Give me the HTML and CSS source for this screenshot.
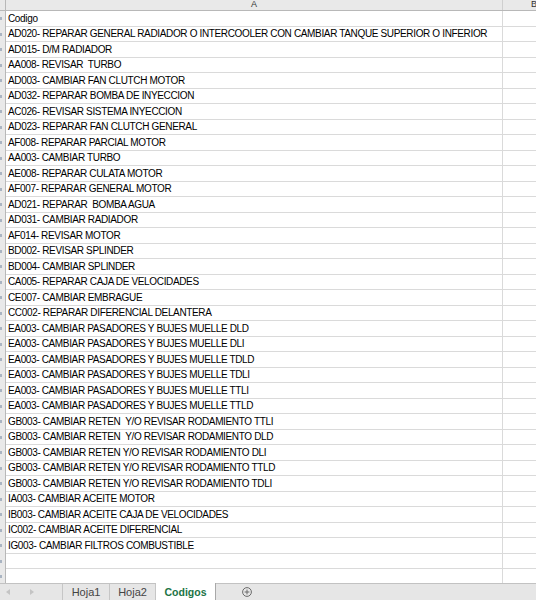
FILE: index.html
```html
<!DOCTYPE html>
<html>
<head>
<meta charset="utf-8">
<link rel="stylesheet" href="styles.css">
</head>
<body>
<div class="app">
  <div class="sheet">
    <div class="hdr"><div class="rh"></div><div class="ch col-a">A</div><div class="ch col-b">B</div></div>
    <div class="row"><div class="rh"></div><div class="cell col-a">Codigo</div><div class="cell col-b"></div></div>
    <div class="row"><div class="rh"></div><div class="cell col-a">AD020- REPARAR GENERAL RADIADOR O INTERCOOLER CON CAMBIAR TANQUE SUPERIOR O INFERIOR</div><div class="cell col-b"></div></div>
    <div class="row"><div class="rh"></div><div class="cell col-a">AD015- D/M RADIADOR</div><div class="cell col-b"></div></div>
    <div class="row"><div class="rh"></div><div class="cell col-a">AA008- REVISAR&nbsp; TURBO</div><div class="cell col-b"></div></div>
    <div class="row"><div class="rh"></div><div class="cell col-a">AD003- CAMBIAR FAN CLUTCH MOTOR</div><div class="cell col-b"></div></div>
    <div class="row"><div class="rh"></div><div class="cell col-a">AD032- REPARAR BOMBA DE INYECCION</div><div class="cell col-b"></div></div>
    <div class="row"><div class="rh"></div><div class="cell col-a">AC026- REVISAR SISTEMA INYECCION</div><div class="cell col-b"></div></div>
    <div class="row"><div class="rh"></div><div class="cell col-a">AD023- REPARAR FAN CLUTCH GENERAL</div><div class="cell col-b"></div></div>
    <div class="row"><div class="rh"></div><div class="cell col-a">AF008- REPARAR PARCIAL MOTOR</div><div class="cell col-b"></div></div>
    <div class="row"><div class="rh"></div><div class="cell col-a">AA003- CAMBIAR TURBO</div><div class="cell col-b"></div></div>
    <div class="row"><div class="rh"></div><div class="cell col-a">AE008- REPARAR CULATA MOTOR</div><div class="cell col-b"></div></div>
    <div class="row"><div class="rh"></div><div class="cell col-a">AF007- REPARAR GENERAL MOTOR</div><div class="cell col-b"></div></div>
    <div class="row"><div class="rh"></div><div class="cell col-a">AD021- REPARAR&nbsp; BOMBA AGUA</div><div class="cell col-b"></div></div>
    <div class="row"><div class="rh"></div><div class="cell col-a">AD031- CAMBIAR RADIADOR</div><div class="cell col-b"></div></div>
    <div class="row"><div class="rh"></div><div class="cell col-a">AF014- REVISAR MOTOR</div><div class="cell col-b"></div></div>
    <div class="row"><div class="rh"></div><div class="cell col-a">BD002- REVISAR SPLINDER</div><div class="cell col-b"></div></div>
    <div class="row"><div class="rh"></div><div class="cell col-a">BD004- CAMBIAR SPLINDER</div><div class="cell col-b"></div></div>
    <div class="row"><div class="rh"></div><div class="cell col-a">CA005- REPARAR CAJA DE VELOCIDADES</div><div class="cell col-b"></div></div>
    <div class="row"><div class="rh"></div><div class="cell col-a">CE007- CAMBIAR EMBRAGUE</div><div class="cell col-b"></div></div>
    <div class="row"><div class="rh"></div><div class="cell col-a">CC002- REPARAR DIFERENCIAL DELANTERA</div><div class="cell col-b"></div></div>
    <div class="row"><div class="rh"></div><div class="cell col-a">EA003- CAMBIAR PASADORES Y BUJES MUELLE DLD</div><div class="cell col-b"></div></div>
    <div class="row"><div class="rh"></div><div class="cell col-a">EA003- CAMBIAR PASADORES Y BUJES MUELLE DLI</div><div class="cell col-b"></div></div>
    <div class="row"><div class="rh"></div><div class="cell col-a">EA003- CAMBIAR PASADORES Y BUJES MUELLE TDLD</div><div class="cell col-b"></div></div>
    <div class="row"><div class="rh"></div><div class="cell col-a">EA003- CAMBIAR PASADORES Y BUJES MUELLE TDLI</div><div class="cell col-b"></div></div>
    <div class="row"><div class="rh"></div><div class="cell col-a">EA003- CAMBIAR PASADORES Y BUJES MUELLE TTLI</div><div class="cell col-b"></div></div>
    <div class="row"><div class="rh"></div><div class="cell col-a">EA003- CAMBIAR PASADORES Y BUJES MUELLE TTLD</div><div class="cell col-b"></div></div>
    <div class="row"><div class="rh"></div><div class="cell col-a">GB003- CAMBIAR RETEN&nbsp; Y/O REVISAR RODAMIENTO TTLI</div><div class="cell col-b"></div></div>
    <div class="row"><div class="rh"></div><div class="cell col-a">GB003- CAMBIAR RETEN&nbsp; Y/O REVISAR RODAMIENTO DLD</div><div class="cell col-b"></div></div>
    <div class="row"><div class="rh"></div><div class="cell col-a">GB003- CAMBIAR RETEN Y/O REVISAR RODAMIENTO DLI</div><div class="cell col-b"></div></div>
    <div class="row"><div class="rh"></div><div class="cell col-a">GB003- CAMBIAR RETEN Y/O REVISAR RODAMIENTO TTLD</div><div class="cell col-b"></div></div>
    <div class="row"><div class="rh"></div><div class="cell col-a">GB003- CAMBIAR RETEN Y/O REVISAR RODAMIENTO TDLI</div><div class="cell col-b"></div></div>
    <div class="row"><div class="rh"></div><div class="cell col-a">IA003- CAMBIAR ACEITE MOTOR</div><div class="cell col-b"></div></div>
    <div class="row"><div class="rh"></div><div class="cell col-a">IB003- CAMBIAR ACEITE CAJA DE VELOCIDADES</div><div class="cell col-b"></div></div>
    <div class="row"><div class="rh"></div><div class="cell col-a">IC002- CAMBIAR ACEITE DIFERENCIAL</div><div class="cell col-b"></div></div>
    <div class="row"><div class="rh"></div><div class="cell col-a">IG003- CAMBIAR FILTROS COMBUSTIBLE</div><div class="cell col-b"></div></div>
    <div class="row"><div class="rh"></div><div class="cell col-a"></div><div class="cell col-b"></div></div>
    <div class="row"><div class="rh"></div><div class="cell col-a"></div><div class="cell col-b"></div></div>
    <div class="row"><div class="rh"></div><div class="cell col-a"></div><div class="cell col-b"></div></div>
  </div>
  <div class="tabbar">
    <div class="nav">
      <svg width="4" height="6" viewBox="0 0 4 6" class="arrow"><path d="M4 0 L0 3 L4 6 Z" fill="#c4c4c4"/></svg>
      <svg width="4" height="6" viewBox="0 0 4 6" class="arrow"><path d="M0 0 L4 3 L0 6 Z" fill="#c4c4c4"/></svg>
    </div>
    <div class="tab">Hoja1</div>
    <div class="tab">Hoja2</div>
    <div class="tab active">Codigos</div>
    <div class="add">
      <svg width="10" height="10" viewBox="0 0 10 10"><circle cx="5" cy="5" r="4.4" fill="none" stroke="#6a6a6a" stroke-width="1"/><path d="M5 2.6 V7.4 M2.6 5 H7.4" stroke="#6a6a6a" stroke-width="1"/></svg>
    </div>
  </div>
</div>
</body>
</html>
```

FILE: styles.css
```css
html, body {
  margin: 0;
  padding: 0;
  background: #ffffff;
}
.app {
  width: 536px;
  height: 600px;
  overflow: hidden;
  display: flex;
  flex-direction: column;
}
.sheet {
  height: 583px;
  overflow: hidden;
  flex: none;
}
.hdr, .row {
  display: flex;
  box-sizing: border-box;
}
.hdr {
  height: 11px;
  background: #e9e9e9;
  border-bottom: 1px solid #b8b8b8;
}
.row {
  height: 16px;
  border-bottom: 1px solid #dadada;
}
.row:nth-child(odd) {
  height: 15px;
}
.rh {
  width: 6px;
  flex: none;
  box-sizing: border-box;
  background: #e9e9e9;
  border-right: 1px solid #b8b8b8;
  margin-bottom: -1px;
  position: relative;
}
.row .rh::before {
  content: "";
  position: absolute;
  left: 0;
  top: 6px;
  width: 2px;
  height: 3px;
  background: #a9b4c2;
}
.hdr .rh {
  margin-bottom: 0;
}
.ch {
  font-family: "Liberation Sans", Arial, sans-serif;
  font-size: 9px;
  color: #333;
  line-height: 9px;
  display: flex;
  align-items: flex-end;
  justify-content: center;
  padding-bottom: 1px;
  box-sizing: border-box;
}
.col-a {
  width: 497px;
  flex: none;
  box-sizing: border-box;
  border-right: 1px solid #dadada;
}
.hdr .col-a {
  border-right-color: #cfcfcf;
}
.col-b {
  flex: 1;
  min-width: 0;
}
.hdr .col-b {
  justify-content: flex-start;
  padding-left: 28px;
}
.cell {
  font-family: "Liberation Sans", Arial, sans-serif;
  font-size: 10px;
  letter-spacing: -0.35px;
  color: #000;
  line-height: 15px;
  padding-left: 2px;
  white-space: nowrap;
}
.row:nth-child(odd) .cell {
  line-height: 14px;
}
.tabbar {
  flex: 1;
  display: flex;
  align-items: stretch;
  background: #e6e6e6;
  border-top: 1px solid #c2c2c2;
  box-sizing: border-box;
  font-family: "Liberation Sans", Arial, sans-serif;
  font-size: 11px;
  color: #444;
}
.nav {
  width: 63px;
  flex: none;
  box-sizing: border-box;
  border-right: 1px solid #c6c6c6;
  display: flex;
  align-items: center;
  padding-left: 6px;
  gap: 20px;
}
.tab {
  display: flex;
  align-items: center;
  justify-content: center;
  box-sizing: border-box;
  border-right: 1px solid #c6c6c6;
  width: 47px;
}
.tab + .tab {
  width: 46px;
}
.tab.active {
  width: 60px;
  background: #ffffff;
  margin-top: -1px;
  color: #217346;
  font-weight: bold;
  font-size: 10.5px;
  border-right: 1px solid #a8a8a8;
}
.add {
  width: 62px;
  display: flex;
  align-items: center;
  justify-content: center;
}
```
